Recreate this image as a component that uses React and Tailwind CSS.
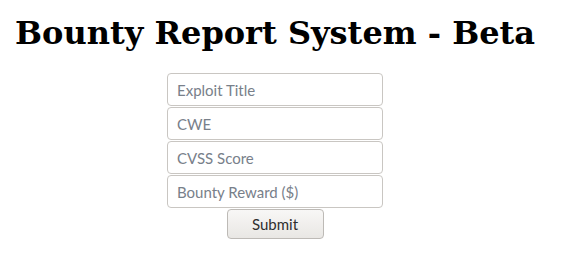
export default function App() {
  const fields = ['Exploit Title', 'CWE', 'CVSS Score', 'Bounty Reward ($)']
  return (
    <div className="w-[564px] h-[266px] bg-white">
      <h1
        className="pl-[15px] pt-[14px] text-[32px] leading-[38px] font-bold text-black"
        style={{ fontFamily: '"DejaVu Serif", serif' }}
      >
        Bounty Report System - Beta
      </h1>
      <form
        className="ml-[167px] mt-[21px] w-[216px] flex flex-col items-center"
        style={{ fontFamily: 'Lato, "Open Sans", sans-serif' }}
        onSubmit={(e) => e.preventDefault()}
      >
        {fields.map((f) => (
          <input
            key={f}
            placeholder={f}
            className="w-[216px] h-[33px] mb-[1px] px-[9px] rounded-[4px] border border-[#c9c6c2] bg-white text-[15px] text-[#333] placeholder:text-[#78808a] outline-none"
          />
        ))}
        <button
          type="submit"
          className="mt-0 w-[97px] h-[30px] rounded-[4px] border border-[#bdbab6] bg-gradient-to-b from-[#f8f7f6] to-[#e9e7e4] text-[15px] text-[#2e2e2e]"
        >
          Submit
        </button>
      </form>
    </div>
  )
}
